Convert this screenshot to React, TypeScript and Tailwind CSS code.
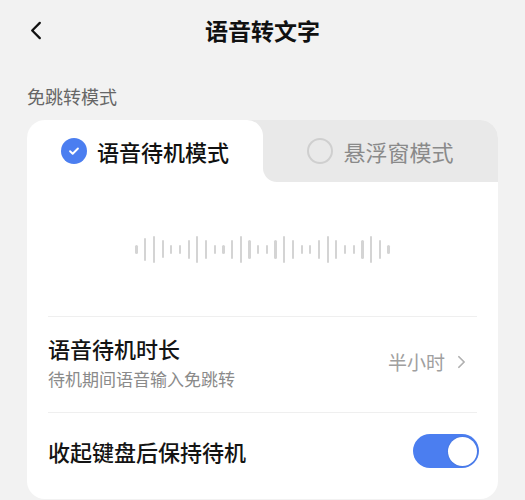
const bars = [9, 23, 27, 18, 9, 9, 19, 27, 19, 9, 9, 19, 27, 19, 9, 9, 19, 27, 19, 9, 9, 19, 27, 19, 9, 9, 19, 27, 19, 9];

function Chevron({ className }: { className?: string }) {
  return (
    <svg viewBox="0 0 10 16" className={className} fill="none" stroke="currentColor" strokeWidth="2" strokeLinecap="round" strokeLinejoin="round">
      <path d="M2 2l6 6-6 6" />
    </svg>
  );
}

export default function App() {
  return (
    <div className="w-[525px] h-[500px] overflow-hidden bg-[#f2f2f2] font-['Noto_Sans_CJK_SC',sans-serif]">
      {/* header */}
      <div className="grid grid-cols-[1fr_auto_1fr] items-center h-[60px] px-[30px]">
        <svg viewBox="0 0 12 20" className="w-[12px] h-[19px] text-[#111]" fill="none" stroke="currentColor" strokeWidth="2.4" strokeLinecap="round" strokeLinejoin="round">
          <path d="M10 2L2 10l8 8" />
        </svg>
        <h1 className="text-[23px] leading-[30px] font-semibold text-[#111]">语音转文字</h1>
        <div />
      </div>

      <p className="mt-[24px] mb-[12px] px-[27px] text-[18px] leading-[24px] text-[#666]">免跳转模式</p>

      <div className="mx-[27px] rounded-[18px] bg-white overflow-hidden pb-[4px]">
        {/* tabs */}
        <div className="flex h-[62px] bg-[#e9e9e9]">
          <div className="w-[236px] bg-white rounded-tr-[16px] flex items-center justify-center gap-[10px]">
            <span className="w-[26px] h-[26px] rounded-full bg-[#4b7ef0] flex items-center justify-center">
              <svg viewBox="0 0 16 16" className="w-[14px] h-[14px]" fill="none" stroke="white" strokeWidth="2.2" strokeLinecap="round" strokeLinejoin="round">
                <path d="M3.5 8.3l3 2.9 6-6" />
              </svg>
            </span>
            <span className="text-[22px] leading-[30px] font-medium text-[#111]">语音待机模式</span>
          </div>
          <div className="flex-1 bg-white">
            <div className="h-full bg-[#e9e9e9] rounded-bl-[14px] flex items-center justify-center gap-[10px]">
              <span className="w-[26px] h-[26px] rounded-full border-2 border-[#cfcfcf]" />
              <span className="text-[22px] leading-[30px] text-[#8a8a8a]">悬浮窗模式</span>
            </div>
          </div>
        </div>

        {/* waveform */}
        <div className="h-[134px] flex items-center justify-center gap-[6.5px]">
          {bars.map((h, i) => (
            <span key={i} className="w-[2.2px] rounded-full bg-[#d4d4d4]" style={{ height: h }} />
          ))}
        </div>

        <div className="mx-[21px]">
          <div className="border-t border-[#efefef]" />
          <div className="h-[95px] pb-[6px] flex items-center justify-between">
            <div>
              <p className="text-[22px] leading-[30px] font-medium text-[#141414]">语音待机时长</p>
              <p className="mt-[5px] text-[17px] leading-[22px] text-[#8a8a8a]">待机期间语音输入免跳转</p>
            </div>
            <div className="flex items-center gap-[12px] pr-[11px] text-[#a0a0a0]">
              <span className="text-[19px] leading-[26px]">半小时</span>
              <Chevron className="w-[9px] h-[14px] text-[#b0b0b0]" />
            </div>
          </div>
          <div className="border-t border-[#efefef]" />
          <div className="h-[82px] pb-[6px] flex items-center justify-between">
            <p className="text-[22px] leading-[30px] font-medium text-[#141414]">收起键盘后保持待机</p>
            <div className="w-[66px] h-[34px] -mr-[2px] rounded-full bg-[#4b7ef0] p-[2.5px] flex justify-end">
              <span className="w-[29px] h-[29px] rounded-full bg-white shadow-[0_0_2px_rgba(0,0,0,0.15)]" />
            </div>
          </div>
        </div>
      </div>
    </div>
  );
}
